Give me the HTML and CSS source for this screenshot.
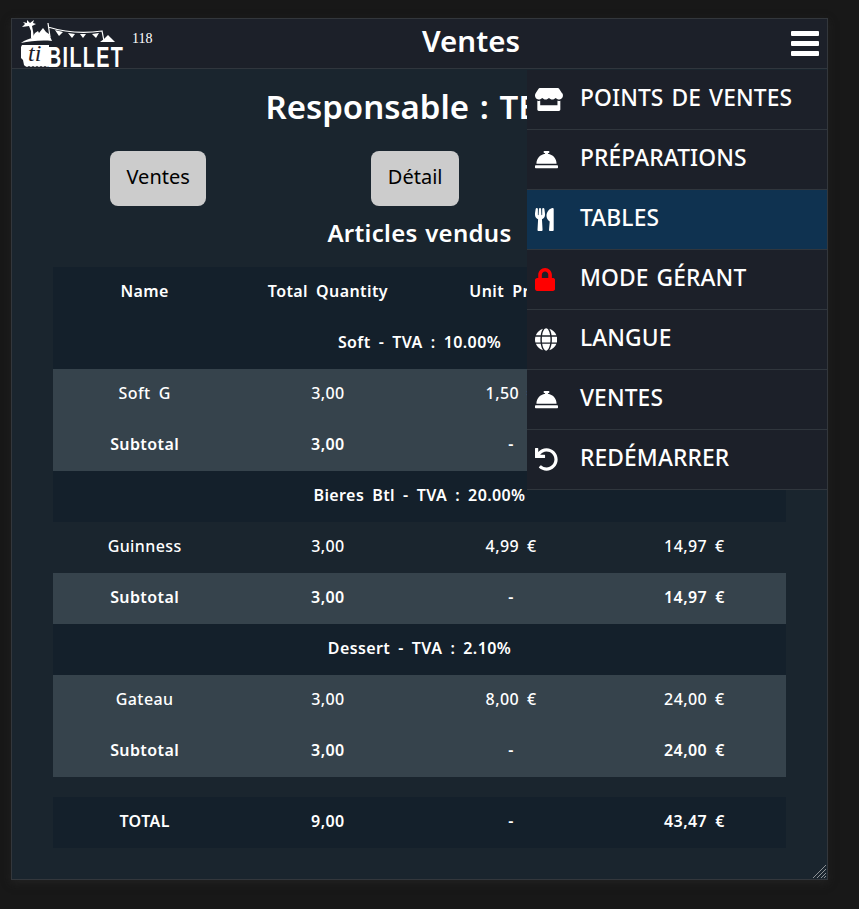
FILE: index.html
```html
<!DOCTYPE html>
<html lang="fr">
<head>
    <meta charset="UTF-8">
    <meta name="viewport" content="width=device-width, initial-scale=1.0">
    <title>Ventes</title>
    <link rel="stylesheet" href="styles.css">
</head>
<body>
    <div class="window">
        <header class="topbar">
            <div class="brand">
                <svg class="logo" viewBox="0 0 106 56" width="106" height="56">
                    <path class="logo-fill" d="M1 24C5 21 9 20 12 19l3-5 3-2 1 2 4-5 3 4 3 2 3 7C22 21 10 22 1 24z"/>
                    <path class="logo-fill" d="M9 7L2 8l3-3-2-2 4 1V1l3 3 4-3-1 3 3 1-4 2 1 5 1 7h-3v-7z"/>
                    <path class="logo-line" d="M28 4l2 14M28 8c16 5 34 7 54 4l2 10"/>
                    <path class="logo-fill" d="M35 11l8 2-4 4zM48 14l7 1-3 4zM60 15l6 0-3 4zM72 15l7-1-3 5z"/>
                    <path class="logo-fill" d="M80 23l4-3 4-4 3 3 4 4z"/>
                    <path class="logo-fill" d="M2 26h27v21l-2 1-2-1-2 1-2-1-2 1-2-1-2 1-2-1-2 1-2-1-2 1-2-1-1-1-1-5-2-2V28z"/>
                    <text class="logo-ti" x="8" y="42">ti</text>
                    <text class="logo-name" transform="translate(27 48) scale(0.66 1)">BILLET</text>
                </svg>
                <span class="version">118</span>
            </div>
            <h1 class="page-name">Ventes</h1>
            <svg class="burger" viewBox="0 0 28 25" width="28" height="25">
                <rect y="0" width="28" height="5" rx="1"/>
                <rect y="10" width="28" height="5" rx="1"/>
                <rect y="20" width="28" height="5" rx="1"/>
            </svg>
        </header>

        <main class="content">
            <h2 class="title">Responsable : TEST</h2>
            <div class="actions">
                <button class="btn">Ventes</button>
                <button class="btn">Détail</button>
            </div>
            <h3 class="subtitle">Articles vendus</h3>

            <table class="sales">
                <tr class="dark head">
                    <td>Name</td><td>Total Quantity</td><td>Unit Price</td><td></td>
                </tr>
                <tr class="dark head"><td colspan="4">Soft - TVA : 10.00%</td></tr>
                <tr class="grey"><td>Soft G</td><td>3,00</td><td>1,50 €</td><td></td></tr>
                <tr class="grey head"><td>Subtotal</td><td>3,00</td><td>-</td><td></td></tr>
                <tr class="dark head"><td colspan="4">Bieres Btl - TVA : 20.00%</td></tr>
                <tr><td>Guinness</td><td>3,00</td><td>4,99 €</td><td>14,97 €</td></tr>
                <tr class="grey head"><td>Subtotal</td><td>3,00</td><td>-</td><td>14,97 €</td></tr>
                <tr class="dark head"><td colspan="4">Dessert - TVA : 2.10%</td></tr>
                <tr class="grey"><td>Gateau</td><td>3,00</td><td>8,00 €</td><td>24,00 €</td></tr>
                <tr class="grey head"><td>Subtotal</td><td>3,00</td><td>-</td><td>24,00 €</td></tr>
            </table>

            <table class="sales total">
                <tr class="dark head"><td>TOTAL</td><td>9,00</td><td>-</td><td>43,47 €</td></tr>
            </table>
        </main>

        <nav class="menu">
            <a class="menu-item">
                <span class="menu-icon"><svg viewBox="0 0 616 512" height="23"><path d="M602 118.6L537.1 15C531.3 5.7 521 0 510 0H106C95 0 84.7 5.7 78.9 15L14 118.6c-33.9 54.1-3.9 129.3 59.4 137.9 4.6.6 9.1.9 13.7.9 29.9 0 56.4-13.1 74.6-33.4 18.2 20.3 44.8 33.4 74.6 33.4 29.9 0 56.4-13.1 74.6-33.4 18.2 20.3 44.8 33.4 74.6 33.4 29.9 0 56.4-13.1 74.6-33.4 18.3 20.3 44.8 33.4 74.6 33.4 4.7 0 9.2-.3 13.7-.9 63.5-8.5 93.6-83.7 59.6-137.9zM529.5 288c-10 0-19.9-1.5-29.5-3.8V384H116v-99.8c-9.6 2.2-19.5 3.8-29.5 3.8-6 0-12.1-.4-18-1.2-5.6-.8-11.1-2.1-16.4-3.6V480c0 17.7 14.3 32 32 32h448c17.7 0 32-14.3 32-32V283.2c-5.4 1.6-10.8 2.9-16.4 3.6-6.1.8-12.1 1.2-18.2 1.2z"/></svg></span>
                <span class="menu-label">POINTS DE VENTES</span>
            </a>
            <a class="menu-item">
                <span class="menu-icon"><svg viewBox="0 0 512 512" height="23"><path d="M288 130.54V112h16c8.84 0 16-7.16 16-16V80c0-8.84-7.16-16-16-16h-96c-8.84 0-16 7.16-16 16v16c0 8.84 7.16 16 16 16h16v18.54C115.49 146.11 32 239.18 32 352h448c0-112.82-83.49-205.89-192-221.46zM496 384H16c-8.84 0-16 7.16-16 16v32c0 8.84 7.16 16 16 16h480c8.84 0 16-7.16 16-16v-32c0-8.84-7.16-16-16-16z"/></svg></span>
                <span class="menu-label">PRÉPARATIONS</span>
            </a>
            <a class="menu-item active">
                <span class="menu-icon"><svg viewBox="0 0 416 512" height="23"><path d="M207.9 15.2c.8 4.7 16.1 94.5 16.1 128.8 0 52.3-27.8 89.6-68.9 104.6L168 486.7c.7 13.7-10.2 25.3-24 25.3H80c-13.7 0-24.7-11.5-24-25.3l12.9-238.1C27.7 233.6 0 196.2 0 144 0 109.6 15.3 19.9 16.1 15.2 19.3-5.1 61.4-5.4 64 16.3v141.2c1.3 3.4 15.1 3.2 16 0 1.4-25.3 7.9-139.2 8-141.8 3.3-20.8 44.7-20.8 48 0 .1 2.7 6.6 116.5 8 141.8.9 3.2 14.8 3.4 16 0V16.3c2.6-21.6 44.8-21.4 48-1.1zm119.2 285.7l-15 185.1c-1.2 14 9.9 26 23.9 26h56c13.3 0 24-10.7 24-24V24c0-13.2-10.7-24-24-24-82.5 0-221.4 178.5-64.9 300.9z"/></svg></span>
                <span class="menu-label">TABLES</span>
            </a>
            <a class="menu-item">
                <span class="menu-icon locked"><svg viewBox="0 0 448 512" height="23"><path d="M400 224h-24v-72C376 68.2 307.8 0 224 0S72 68.2 72 152v72H48c-26.5 0-48 21.5-48 48v192c0 26.5 21.5 48 48 48h352c26.5 0 48-21.5 48-48V272c0-26.5-21.5-48-48-48zm-104 0H152v-72c0-39.7 32.3-72 72-72s72 32.3 72 72v72z"/></svg></span>
                <span class="menu-label">MODE GÉRANT</span>
            </a>
            <a class="menu-item">
                <span class="menu-icon"><svg viewBox="0 0 496 512" height="23"><path d="M336.5 160C322 70.7 287.8 8 248 8s-74 62.7-88.5 152h177zM152 256c0 22.2 1.2 43.5 3.3 64h185.3c2.1-20.5 3.3-41.8 3.3-64s-1.2-43.5-3.3-64H155.3c-2.1 20.5-3.3 41.8-3.3 64zm324.7-96c-28.6-67.9-86.5-120.4-158-141.6 24.4 33.8 41.2 84.7 50 141.6h108zM177.2 18.4C105.8 39.6 47.8 92.1 19.3 160h108c8.7-56.9 25.5-107.8 49.9-141.6zM487.4 192H372.7c2.1 21 3.3 42.5 3.3 64s-1.2 43-3.3 64h114.6c5.5-20.5 8.6-41.8 8.6-64s-3.1-43.5-8.5-64zM120 256c0-21.5 1.2-43 3.3-64H8.6C3.2 212.5 0 233.8 0 256s3.2 43.5 8.6 64h114.6c-2-21-3.2-42.5-3.2-64zm39.5 96c14.5 89.3 48.7 152 88.5 152s74-62.7 88.5-152h-177zm159.3 141.6c71.4-21.2 129.4-73.7 158-141.6h-108c-8.8 56.9-25.6 107.8-50 141.6zM19.3 352c28.6 67.9 86.5 120.4 158 141.6-24.4-33.8-41.2-84.7-50-141.6h-108z"/></svg></span>
                <span class="menu-label">LANGUE</span>
            </a>
            <a class="menu-item">
                <span class="menu-icon"><svg viewBox="0 0 512 512" height="23"><path d="M288 130.54V112h16c8.84 0 16-7.16 16-16V80c0-8.84-7.16-16-16-16h-96c-8.84 0-16 7.16-16 16v16c0 8.84 7.16 16 16 16h16v18.54C115.49 146.11 32 239.18 32 352h448c0-112.82-83.49-205.89-192-221.46zM496 384H16c-8.84 0-16 7.16-16 16v32c0 8.84 7.16 16 16 16h480c8.84 0 16-7.16 16-16v-32c0-8.84-7.16-16-16-16z"/></svg></span>
                <span class="menu-label">VENTES</span>
            </a>
            <a class="menu-item">
                <span class="menu-icon"><svg viewBox="0 0 512 512" height="23"><path d="M212.333 224.333H12c-6.627 0-12-5.373-12-12V12C0 5.373 5.373 0 12 0h48c6.627 0 12 5.373 12 12v78.112C117.773 39.279 184.26 7.47 258.175 8.007c136.906.994 246.448 111.623 246.157 248.532C504.041 393.258 393.12 504 256.333 504c-64.089 0-122.496-24.313-166.51-64.215-5.099-4.622-5.334-12.554-.467-17.42l33.967-33.967c4.474-4.474 11.662-4.717 16.401-.525C170.76 415.336 211.58 432 256.333 432c97.268 0 176-78.716 176-176 0-97.267-78.716-176-176-176-58.496 0-110.28 28.476-142.274 72.333h98.274c6.627 0 12 5.373 12 12v48c0 6.627-5.373 12-12 12z"/></svg></span>
                <span class="menu-label">REDÉMARRER</span>
            </a>
        </nav>

        <svg class="grip" viewBox="0 0 13 13" width="13" height="13">
            <path d="M0 13L13 0M4 13L13 4M8 13L13 8M11 13L13 11"/>
        </svg>
    </div>
</body>
</html>
```

FILE: styles.css
```css
* {
    box-sizing: border-box;
}

body {
    font-family: "Noto Sans", sans-serif;
    background: #181818;
    color: #fff;
    margin: 0;
    padding: 18px 31px 0 11px;
    height: 909px;
    overflow: hidden;
}

.window {
    position: relative;
    height: 862px;
    background: #1a252e;
    border: 1px solid #33373c;
    box-shadow: 0 3px 8px rgba(40, 40, 40, 0.6);
}

.topbar {
    display: flex;
    align-items: center;
    justify-content: space-between;
    height: 50px;
    background: #1c2029;
    border-bottom: 1px solid #30363d;
    position: relative;
    padding-right: 8px;
}

.brand {
    display: flex;
    align-items: flex-start;
    height: 49px;
    padding-left: 8px;
}

.logo {
    display: block;
}

.logo-fill {
    fill: #fff;
}

.logo-line {
    fill: none;
    stroke: #fff;
    stroke-width: 1.2;
}

.logo-ti {
    font-family: "Liberation Serif", serif;
    font-style: italic;
    font-size: 24px;
    fill: #1c2029;
}

.logo-name {
    font-family: "Liberation Sans", sans-serif;
    font-size: 30px;
    font-weight: bold;
    letter-spacing: 2px;
    fill: #fff;
}

.version {
    font-family: "Liberation Serif", serif;
    font-size: 14px;
    margin: 12px 0 0 6px;
}

.page-name {
    position: absolute;
    left: 0;
    right: 0;
    top: 0;
    margin: 0;
    text-align: center;
    font-size: 29.5px;
    font-weight: 600;
    line-height: 43px;
    padding-left: 103px;
}

.burger {
    fill: #fff;
    display: block;
}

.content {
    padding: 18px 41px 0;
}

.title {
    margin: 0;
    text-align: center;
    font-size: 33px;
    font-weight: 600;
    line-height: 40px;
    word-spacing: 2px;
}

.actions {
    display: flex;
    gap: 165px;
    margin: 24px 0 0 57px;
}

.btn {
    height: 55px;
    padding: 0 16.5px 4px;
    font-family: inherit;
    font-size: 20px;
    color: #000;
    background: #ccc;
    border: none;
    border-radius: 8px;
}

.subtitle {
    margin: 10px 0 18px;
    text-align: center;
    font-size: 24px;
    font-weight: 600;
    line-height: 33px;
    letter-spacing: 0.3px;
    word-spacing: 1px;
}

.sales {
    width: 733px;
    table-layout: fixed;
    border-collapse: collapse;
    font-size: 16px;
    font-weight: 500;
    letter-spacing: 0.4px;
    word-spacing: 3.5px;
}

.sales td {
    height: 51px;
    padding: 0 0 4px;
    text-align: center;
}

.sales.total {
    margin-top: 20px;
}

.dark {
    background: #14202b;
}

.grey {
    background: #36434c;
}

.sales .head td {
    font-weight: 600;
}

.menu {
    position: absolute;
    top: 51px;
    right: 0;
    width: 300px;
    background: #1c2029;
}

.menu-item {
    display: flex;
    align-items: center;
    height: 60px;
    border-bottom: 1px solid #30363d;
    font-size: 22.8px;
    font-weight: 500;
    letter-spacing: 0.1px;
    word-spacing: 2px;
}

.menu-item.active {
    background: #0f3250;
}

.menu-label {
    padding-bottom: 5px;
}

.menu-icon {
    display: flex;
    width: 53px;
    padding-left: 8px;
    fill: #fff;
}

.menu-icon.locked {
    fill: #f00;
}

.grip {
    position: absolute;
    right: 1px;
    bottom: 1px;
    stroke: #8e9296;
    stroke-width: 1;
    fill: none;
}
```
